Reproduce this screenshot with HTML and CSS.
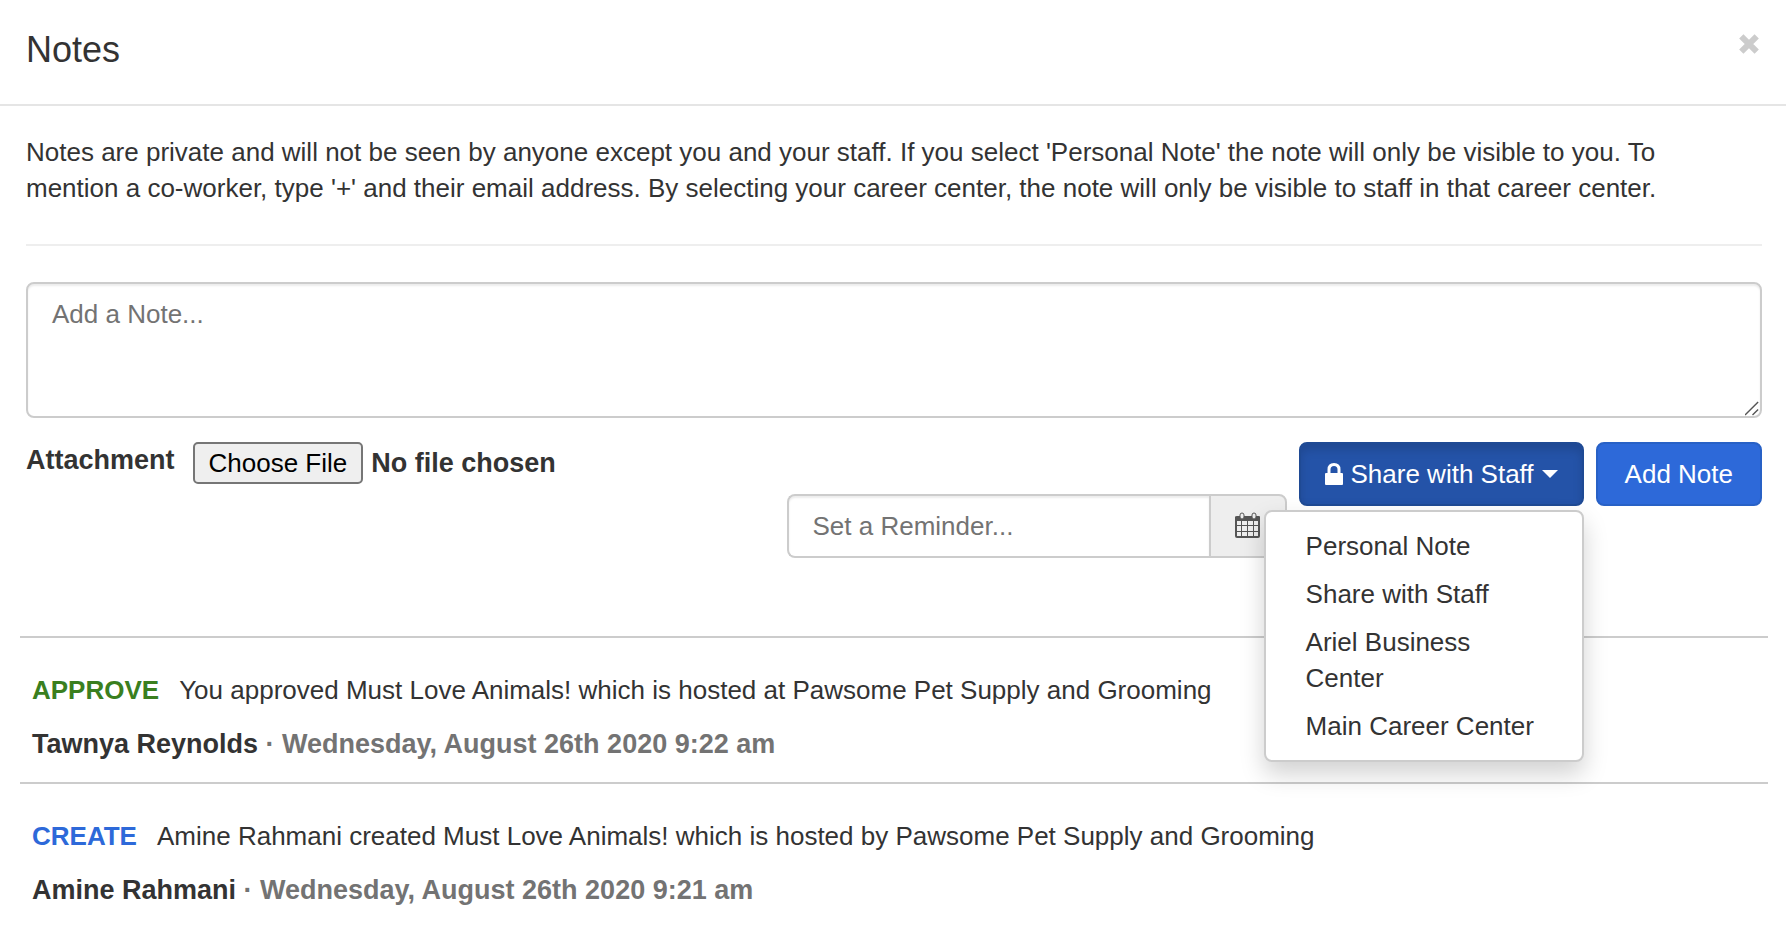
FILE: index.html
```html
<!DOCTYPE html>
<html lang="en">
<head>
    <meta charset="UTF-8">
    <meta name="viewport" content="width=device-width, initial-scale=1.0">
    <title>Notes</title>
    <link rel="stylesheet" href="styles.css">
</head>
<body>
    <header class="modal-header">
        <h1 class="modal-title">Notes</h1>
        <button type="button" class="close" aria-label="Close">
            <svg width="22" height="22" viewBox="0 0 20 20">
                <path d="M3 3L17 17M17 3L3 17" stroke="currentColor" stroke-width="5.500" fill="none"/>
            </svg>
        </button>
    </header>
    <main class="modal-body">
        <p class="intro">Notes are private and will not be seen by anyone except you and your staff. If you select 'Personal Note' the note will only be visible to you. To mention a co-worker, type '+' and their email address. By selecting your career center, the note will only be visible to staff in that career center.</p>
        <hr class="divider">
        <form class="note-form">
            <textarea class="note-text" aria-label="Note" placeholder="Add a Note..."></textarea>
            <div class="toolbar">
                <div class="attachment">
                    <label for="attachment">Attachment</label>
                    <input type="file" id="attachment">
                </div>
                <div class="reminder">
                    <input type="text" class="reminder-input" aria-label="Reminder" placeholder="Set a Reminder...">
                    <button type="button" class="reminder-addon" aria-label="Pick a date">
                        <svg width="26" height="26" viewBox="0 0 26 26">
                            <path d="M2 4H24Q25 4 25 5V24Q25 26 23 26H2Q0 26 0 24V5Q0 4 2 4Z" fill="#555"/>
                            <path d="M2 9H6V13H2ZM7 9H12V13H7ZM13 9H18V13H13ZM19 9H23V13H19ZM2 14H6V19H2ZM7 14H12V19H7ZM13 14H18V19H13ZM19 14H23V19H19ZM2 20H6V24H2ZM7 20H12V24H7ZM13 20H18V24H13ZM19 20H23V24H19Z" fill="#eee"/>
                            <rect x="5" y="1" width="4" height="6" rx="2" fill="#eee" stroke="#555" stroke-width="1"/>
                            <rect x="17" y="1" width="4" height="6" rx="2" fill="#eee" stroke="#555" stroke-width="1"/>
                        </svg>
                    </button>
                </div>
                <div class="dropdown">
                    <button type="button" class="btn btn-active" aria-haspopup="true" aria-expanded="true">
                        <svg width="18" height="22" viewBox="0 0 18 22">
                            <path d="M4 11V6.500Q4 1.500 9 1.500T14 6.500V11" fill="none" stroke="#fff" stroke-width="3"/>
                            <rect x="0" y="10" width="18" height="12" rx="1" fill="#fff"/>
                        </svg>
                        Share with Staff
                        <span class="caret"></span>
                    </button>
                    <ul class="dropdown-menu">
                        <li><a href="#">Personal Note</a></li>
                        <li><a href="#">Share with Staff</a></li>
                        <li><a href="#">Ariel Business Center</a></li>
                        <li><a href="#">Main Career Center</a></li>
                    </ul>
                </div>
                <button type="submit" class="btn">Add Note</button>
            </div>
        </form>
        <ul class="notes">
            <li class="note">
                <p class="note-body"><strong class="tag tag-approve">APPROVE</strong>You approved Must Love Animals! which is hosted at Pawsome Pet Supply and Grooming</p>
                <p class="note-meta">Tawnya Reynolds <span class="muted">· Wednesday, August 26th 2020 9:22 am</span></p>
            </li>
            <li class="note">
                <p class="note-body"><strong class="tag tag-create">CREATE</strong>Amine Rahmani created Must Love Animals! which is hosted by Pawsome Pet Supply and Grooming</p>
                <p class="note-meta">Amine Rahmani <span class="muted">· Wednesday, August 26th 2020 9:21 am</span></p>
            </li>
        </ul>
    </main>
</body>
</html>
```
FILE: styles.css
```css
* {
    box-sizing: border-box;
}
body {
    margin: 0;
    background-color: #fff;
    color: #333;
    font-family: "Liberation Sans", Arial, sans-serif;
    font-size: 26px;
    line-height: 36px;
}
p, ul {
    margin: 0;
    padding: 0;
}
input, textarea, button {
    font: inherit;
}
.modal-header {
    display: flex;
    justify-content: space-between;
    align-items: flex-start;
    padding: 28px 26px 32px;
    border-bottom: 2px solid #e5e5e5;
}
.modal-title {
    margin: 0;
    font-size: 36px;
    font-weight: normal;
    line-height: 44px;
}
.close {
    display: flex;
    margin-top: 5px;
    padding: 0;
    border: 0;
    background: none;
    color: #ccc;
    cursor: pointer;
}
.modal-body {
    padding: 28px 24px 30px 26px;
}
.intro {
    padding-right: 40px;
}
.divider {
    margin: 38px 0 36px;
    border: 0;
    border-top: 2px solid #eee;
}
.note-text {
    display: block;
    width: 100%;
    height: 136px;
    padding: 12px 24px;
    border: 2px solid #ccc;
    border-radius: 8px;
    box-shadow: inset 0 2px 2px rgba(0, 0, 0, 0.08);
    resize: vertical;
}
.note-text::-webkit-resizer {
    background: url("data:image/svg+xml,%3Csvg xmlns='http://www.w3.org/2000/svg' viewBox='0 0 16 16'%3E%3Cpath d='M0 15L14 1M8 15L14 9' stroke='%23555' stroke-width='1.500'/%3E%3C/svg%3E") no-repeat;
}
::placeholder {
    color: #737373;
    opacity: 1;
}
.toolbar {
    display: flex;
    align-items: flex-start;
    gap: 12px;
    margin-top: 24px;
}
.attachment {
    display: flex;
    flex: 1;
    align-items: flex-start;
    gap: 18px;
    font-size: 27px;
    font-weight: bold;
}
.attachment input::file-selector-button {
    height: 42px;
    margin-right: 8px;
    padding: 0 14px;
    border: 2px solid #767676;
    border-radius: 5px;
    background-color: #efefef;
    color: #000;
    font-size: 26px;
    font-weight: normal;
}
.reminder {
    display: flex;
    width: 500px;
    height: 64px;
    margin-top: 52px;
}
.reminder-input {
    flex: 1;
    min-width: 0;
    padding: 0 24px;
    border: 2px solid #ccc;
    border-right: 0;
    border-radius: 8px 0 0 8px;
    box-shadow: inset 0 2px 2px rgba(0, 0, 0, 0.08);
}
.reminder-addon {
    display: flex;
    align-items: center;
    padding: 0 24px 2px;
    border: 2px solid #ccc;
    border-radius: 0 8px 8px 0;
    background-color: #eee;
}
.btn {
    display: flex;
    align-items: center;
    justify-content: center;
    height: 64px;
    padding: 0 27px;
    border: 2px solid #2861c6;
    border-radius: 8px;
    background-color: #2d69d9;
    color: #fff;
    white-space: nowrap;
    cursor: pointer;
}
.btn-active {
    gap: 8px;
    padding: 0 24px;
    border-color: #1f4a94;
    background-color: #2453a8;
    box-shadow: inset 0 6px 10px rgba(0, 0, 0, 0.13);
}
.caret {
    border-top: 8px solid #fff;
    border-left: 8px solid transparent;
    border-right: 8px solid transparent;
}
.dropdown {
    position: relative;
}
.dropdown-menu {
    position: absolute;
    top: 68px;
    right: 0;
    width: 320px;
    padding: 10px 0;
    border: 2px solid #ccc;
    border-radius: 8px;
    background-color: #fff;
    box-shadow: 0 12px 24px rgba(0, 0, 0, 0.18);
    list-style: none;
}
.dropdown-menu a {
    display: block;
    padding: 6px 40px;
    color: #333;
    text-decoration: none;
}
.notes {
    margin: 78px -6px 0;
    list-style: none;
}
.note {
    padding: 34px 12px 20px;
    border-top: 2px solid #ccc;
}
.note-meta {
    margin-top: 18px;
    font-size: 27px;
    font-weight: bold;
}
.tag {
    margin-right: 20px;
}
.tag-approve {
    color: #3a7f1f;
}
.tag-create {
    color: #2d69d9;
}
.muted {
    color: #737373;
}
```
